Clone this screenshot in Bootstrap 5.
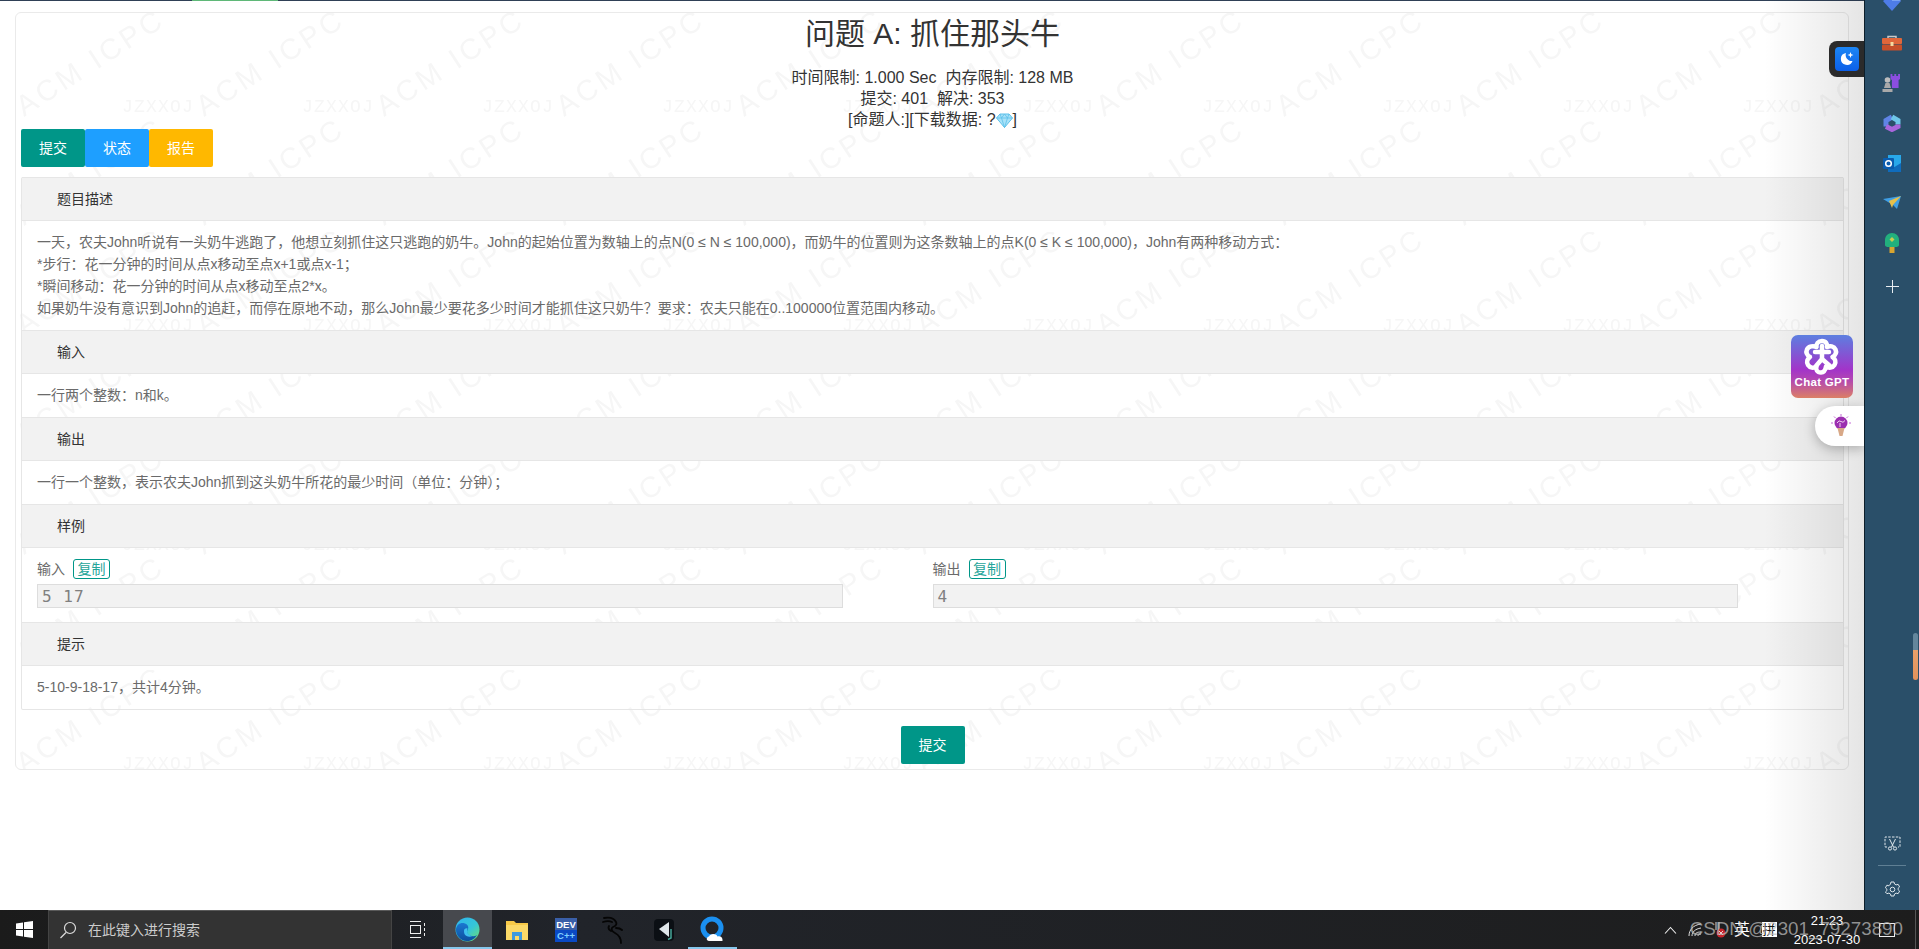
<!DOCTYPE html>
<html lang="zh-CN">
<head>
  <meta charset="UTF-8">
  <title>问题 A: 抓住那头牛</title>
  <link href="https://cdn.jsdelivr.net/npm/bootstrap@5.3.3/dist/css/bootstrap.min.css" rel="stylesheet">
  <style>
    html, body { height: 949px; overflow: hidden; }
    body { font-family: "Liberation Sans", "Noto Sans CJK SC", sans-serif; font-size: 14px; color: #333; background: #fff; }
    .page-main { width: 1864px; height: 910px; }
    .load-bar { height: 1px; background: #2f4056; }
    .load-bar i { display: block; width: 86px; height: 1px; margin-left: 192px; background: #5fb878; }
    .oj-panel { width: 1834px; margin: 11px 0 0 15px; padding: 0 4px 5px 5px; border: 1px solid #eaeaea; border-radius: 6px; overflow: hidden; }
    .wm-layer { width: 100%; height: 100%; }
    .wm-big { font: 29px "Liberation Sans", sans-serif; letter-spacing: 3.6px; fill: #f6f6f6; }
    .wm-small { font: 18px "Liberation Mono", monospace; letter-spacing: 1.2px; fill: #f6f6f6; }
    .oj-title { font-size: 30px; font-weight: 400; line-height: 40px; margin: 1px 0 13px; color: #333; }
    .oj-meta { height: 62px; font-size: 16px; line-height: 21px; color: #333; }
    .oj-btn { --bs-btn-padding-x: 0; --bs-btn-padding-y: 0; --bs-btn-font-size: 14px; --bs-btn-border-radius: 2px; --bs-btn-border-width: 0; --bs-btn-color: #fff; width: 64px; height: 38px; line-height: 38px; }
    .oj-teal { background: #009688; }
    .oj-blue { background: #1e9fff; }
    .oj-gold { background: #ffb800; }
    .oj-collapse { margin-top: 10px; border: 1px solid #e6e6e6; border-top: 0; border-radius: 2px; }
    .oj-head { height: 44px; line-height: 42px; padding-left: 35px; background: #f2f2f2; border-top: 1px solid #e6e6e6; border-bottom: 1px solid #e6e6e6; color: #333; }
    .oj-body { padding: 10px 15px 11px; line-height: 22px; color: #6a6a6a; }
    .oj-sample { padding: 11px 15px 14px; color: #6a6a6a; }
    .copy-tag { display: inline-block; height: 20px; line-height: 18px; padding: 0 3.5px; margin-left: 8px; border: 1px solid #009688; border-radius: 3px; color: #26a59a; }
    .sample-top { height: 20px; line-height: 20px; margin-bottom: 5px; }
    .sample-box { width: 90%; height: 24px; padding: 1px 4px 0; background: #f2f2f2; border: 1px solid #ddd; font: 16px/22px "DejaVu Sans Mono", monospace; letter-spacing: 1px; color: #808080; overflow: hidden; }
    .oj-foot { margin-top: 16px; }
    .edge-shade { top: 0; right: 0; width: 100px; height: 910px; background: linear-gradient(to right, rgba(0,0,0,0), rgba(0,0,0,.1)); pointer-events: none; }
    .moon-tab { top: 41px; right: 0; width: 35px; height: 36px; background: #2b2b2b; border-radius: 8px 0 0 8px; padding: 6px 0 0 6px; }
    .gpt-tile { top: 335px; right: 11px; width: 62px; height: 63px; border-radius: 7px; background: linear-gradient(#5c7fe0, #a234c9 55%, #b348b0 72%, #dc7f66); text-align: center; }
    .gpt-tile span { display: block; margin-top: -3px; font-size: 11.5px; font-weight: 700; line-height: 14px; color: #fff; letter-spacing: .3px; }
    .bulb-tab { top: 406px; right: 0; width: 49px; height: 40px; background: #fff; border-radius: 20px 0 0 20px; box-shadow: 0 3px 12px rgba(0,0,0,.25); padding: 8px 0 0 16px; }
    .side-bar { width: 55px; height: 910px; background: #2a4f69; border-left: 1px solid #0d1f2b; overflow: hidden; }
    .side-icons { margin-top: -17px; }
    .side-item { height: 40px; }
    .side-plus { margin-top: 3px; }
    .side-sep { width: 28px; height: 1px; background: #5f7f94; margin: 2px auto 0; }
    .side-gear { margin: 3px 0 1px; }
    .side-thumb { top: 633px; right: 1px; width: 5px; height: 47px; border-radius: 3px; background: linear-gradient(#64869c 36%, #e8a06a 37%, #e0925c); }
    .task-bar { height: 39px; background: linear-gradient(to right, #1b1b1b, #21242a 30%, #1d1d1d); color: #fff; }
    .task-start { width: 48px; }
    .task-search { width: 344px; height: 39px; background: #333; border-top: 1px solid #5a5a5a; border-left: 1px solid #444; border-right: 1px solid #444; color: #ccc; padding-left: 10px; gap: 11px; }
    .task-view { width: 51px; }
    .task-app { width: 49px; height: 39px; }
    .task-on { background: #47494e; box-shadow: inset 0 -2px 0 #86c7ec; }
    .task-mark { box-shadow: inset 0 -2px 0 #86c7ec; }
    .tray-zone { margin-left: auto; }
    .tray-cell { height: 39px; font-size: 16px; }
    .clock-cell { width: 82px; font-size: 13px; line-height: 19px; text-align: center; }
    .ime-box { background: #fff; color: #111; width: 15px; height: 15px; font-size: 13px; line-height: 15px; text-align: center; }
    .note-box { width: 16px; height: 14px; border: 1px solid #eee; }
    .tray-line { width: 1px; height: 39px; background: #555; margin: 0 3px 0 9px; }
    .csdn-mark { right: 16px; bottom: 8px; font-size: 18.8px; line-height: 24px; color: rgba(190,190,190,.72); white-space: nowrap; pointer-events: none; }
  </style>
</head>
<body>
  <div class="d-flex">
    <div class="page-main position-relative">
      <div class="load-bar"><i></i></div>
      <div class="oj-panel position-relative">
        <svg class="wm-layer position-absolute top-0 start-0" aria-hidden="true">
          <defs>
            <pattern id="wmTile" x="1" width="180" height="219" patternUnits="userSpaceOnUse">
              <text class="wm-big" transform="translate(7 104) rotate(-33)">ACM ICPC</text>
              <text class="wm-big" transform="translate(7 213) rotate(-33)">ACM ICPC</text>
              <text class="wm-small" x="105" y="99">JZXXOJ</text>
            </pattern>
          </defs>
          <rect width="100%" height="100%" fill="url(#wmTile)"></rect>
        </svg>
        <div class="position-relative">
          <h2 class="oj-title text-center">问题 A: 抓住那头牛</h2>
          <div class="oj-meta text-center">
            <div>时间限制: 1.000 Sec&nbsp;&nbsp;内存限制: 128 MB</div>
            <div>提交: 401&nbsp;&nbsp;解决: 353</div>
            <div>[命题人:][下载数据: ?<svg width="17" height="15" viewBox="0 0 17 15" class="align-text-bottom"><path d="M4 1h9l3.500 4-8 9.500L.5 5z" fill="#a8e2f8" stroke="#5cc0ea"/><path d="M.5 5h16M5.500 5l3 9.500 3-9.500M4 1l1.500 4L8.500 1l3 4L13 1" fill="none" stroke="#5cc0ea" stroke-width=".8"/></svg>]</div>
          </div>
          <div class="d-flex">
            <a class="btn oj-btn oj-teal" href="#">提交</a>
            <a class="btn oj-btn oj-blue" href="#">状态</a>
            <a class="btn oj-btn oj-gold" href="#">报告</a>
          </div>
          <div class="oj-collapse">
            <div class="oj-head">题目描述</div>
            <div class="oj-body">
              一天，农夫John听说有一头奶牛逃跑了，他想立刻抓住这只逃跑的奶牛。John的起始位置为数轴上的点N(0 ≤ N ≤ 100,000)，而奶牛的位置则为这条数轴上的点K(0 ≤ K ≤ 100,000)，John有两种移动方式：<br>
              *步行：花一分钟的时间从点x移动至点x+1或点x-1；<br>
              *瞬间移动：花一分钟的时间从点x移动至点2*x。<br>
              如果奶牛没有意识到John的追赶，而停在原地不动，那么John最少要花多少时间才能抓住这只奶牛？要求：农夫只能在0..100000位置范围内移动。
            </div>
            <div class="oj-head">输入</div>
            <div class="oj-body">一行两个整数：n和k。</div>
            <div class="oj-head">输出</div>
            <div class="oj-body">一行一个整数，表示农夫John抓到这头奶牛所花的最少时间（单位：分钟）；</div>
            <div class="oj-head">样例</div>
            <div class="oj-sample">
              <div class="row g-0">
                <div class="col-6">
                  <div class="sample-top">输入<span class="copy-tag">复制</span></div>
                  <pre class="sample-box m-0">5 17</pre>
                </div>
                <div class="col-6">
                  <div class="sample-top">输出<span class="copy-tag">复制</span></div>
                  <pre class="sample-box m-0">4</pre>
                </div>
              </div>
            </div>
            <div class="oj-head">提示</div>
            <div class="oj-body">5-10-9-18-17，共计4分钟。</div>
          </div>
          <div class="oj-foot text-center"><a class="btn oj-btn oj-teal" href="#">提交</a></div>
        </div>
      </div>

      <div class="edge-shade position-absolute"></div>

      <!-- floating tabs from browser extensions -->
      <div class="moon-tab position-absolute">
        <svg width="24" height="24" viewBox="0 0 24 24">
          <defs><linearGradient id="moonBg" x1="0" y1="0" x2="0" y2="1"><stop offset="0" stop-color="#1c86f5"/><stop offset="1" stop-color="#0c5fe8"/></linearGradient></defs>
          <rect width="24" height="24" rx="4" fill="url(#moonBg)"/>
          <path d="M11 6a6 6 0 1 0 6.500 8A6 6 0 0 1 11 6z" fill="#fff"/>
          <path d="M15.500 5l.8 2.200 2.200.8-2.200.8-.8 2.200-.8-2.200-2.200-.8 2.200-.8z" fill="#fff"/>
        </svg>
      </div>
      <div class="gpt-tile position-absolute">
        <svg width="40" height="40" viewBox="0 0 40 40" fill="none" stroke="#fff" stroke-width="4.500" stroke-linecap="round" stroke-linejoin="round" class="d-block mx-auto" style="margin-top:3px">
          <path d="M20 3c4 0 5.500 3 5 6 3-1.500 7-1 8.500 2.500s-.5 6-3 7.500c2.500 1.500 4 5 2 8s-5.500 3.500-8.500 1.500c-.5 3-2 6-5 6-4 0-5.500-3-4.500-6-3 2-6.500 1.500-8.500-1.500s-.5-6.500 2-8c-2.500-1.500-4.500-4-3-7.500S11.500 7.500 14.500 9c-.5-3 1.500-6 5.500-6z"/>
          <path d="M13 14h14M20 8v13l8 7M20 21l-6 7"/>
        </svg>
        <span>Chat GPT</span>
      </div>
      <div class="bulb-tab position-absolute">
        <svg width="20" height="24" viewBox="0 0 20 24">
          <g stroke="#c46ad6" stroke-width="1"><path d="M10 0v2M3 2.500l1.500 1.500M17 2.500L15.500 4M0 9h2M18 9h2"/></g>
          <circle cx="10" cy="9" r="6.500" fill="#9b2fb0"/>
          <path d="M6 9q2-3.500 4-1.500t4-1M9 9v4" stroke="#f0d0f0" fill="none"/>
          <path d="M6.500 14h7l-2 8h-3z" fill="#d8a887"/>
        </svg>
      </div>
    </div>

    <aside class="side-bar position-relative d-flex flex-column">
      <div class="side-icons">
        <div class="side-item d-flex align-items-center justify-content-center">
          <svg width="20" height="18" viewBox="0 0 20 18"><path d="M10 0l9 7-9 10-9-10z" fill="#4e7ce8"/><path d="M10 0l9 7H10z" fill="#7aa2f2"/></svg>
        </div>
        <div class="side-item d-flex align-items-center justify-content-center">
          <svg width="20" height="16" viewBox="0 0 20 16"><path d="M6 3V1.500h8V3" fill="none" stroke="#c9c9c9" stroke-width="1.500"/><rect y="3" width="20" height="6" rx="1" fill="#e0663a"/><rect y="9.500" width="20" height="6" rx="1" fill="#c64f2a"/><rect x="8.500" y="7" width="3" height="4" fill="#f4d9a0"/></svg>
        </div>
        <div class="side-item d-flex align-items-center justify-content-center">
          <svg width="20" height="20" viewBox="0 0 20 20"><path d="M10 1h2v2h2V1h2v2h2V1h2v5l-1.500 1v8h-7V7L10 6z" fill="#8b4ee0" transform="translate(-1 0) scale(.95 1)"/><circle cx="5.500" cy="7" r="2.800" fill="#bdbdbd"/><path d="M3.500 10h4l1.500 5H2zM.5 16h10v3H.5z" fill="#a9a9a9"/></svg>
        </div>
        <div class="side-item d-flex align-items-center justify-content-center">
          <svg width="18" height="18" viewBox="0 0 18 18" fill="none" stroke-width="5">
            <path d="M3 12.500V6.500L9 3" stroke="#5f84e6"/>
            <path d="M9 3l6 3.500v4" stroke="#6ec6ea"/>
            <path d="M15 10.500v2L9 15.500 3 12.500" stroke="#a866dc"/>
          </svg>
        </div>
        <div class="side-item d-flex align-items-center justify-content-center">
          <svg width="18" height="17" viewBox="0 0 18 17"><path d="M5 0h13v17H5z" fill="#28a8ea"/><path d="M5 8l6.500 4L18 8v9H5z" fill="#0f6cbd"/><rect y="3" width="11" height="11" rx="1" fill="#0a5cae"/><circle cx="5.500" cy="8.500" r="2.800" fill="none" stroke="#fff" stroke-width="1.500"/></svg>
        </div>
        <div class="side-item d-flex align-items-center justify-content-center">
          <svg width="18" height="14" viewBox="0 0 18 14"><path d="M0 3l18-3-4 13-4-4z" fill="#3f9fe6"/><path d="M6 5l12-5-8 9-1 3z" fill="#e6c04a"/></svg>
        </div>
        <div class="side-item d-flex align-items-center justify-content-center">
          <svg width="16" height="20" viewBox="0 0 16 20"><path d="M8 0c4 0 7 3 7 7v5c0 1.500-2 2-3 2H4c-1 0-3-.5-3-2V7c0-4 3-7 7-7z" fill="#22b07d"/><rect x="5.500" y="14" width="5" height="6" fill="#d8a530"/><path d="M8 4l2.500 2.500L8 9 5.500 6.500z" fill="#c8cc50"/></svg>
        </div>
        <div class="side-item side-plus d-flex align-items-center justify-content-center">
          <svg width="13" height="13" viewBox="0 0 13 13"><path d="M6.500 0v13M0 6.500h13" stroke="#e8eef2" stroke-width="1"/></svg>
        </div>
      </div>
      <div class="mt-auto">
        <div class="side-item d-flex align-items-center justify-content-center">
          <svg width="17" height="15" viewBox="0 0 17 15" fill="none" stroke="#dfe7ec" stroke-width="1"><path d="M3 11H1V1h15v10h-2" stroke-dasharray="2.500 1.300"/><path d="M5.500 3l4 8M11.500 3l-4 8"/><circle cx="6" cy="12.500" r="1.600"/><circle cx="11" cy="12.500" r="1.600"/></svg>
        </div>
        <div class="side-sep"></div>
        <div class="side-item side-gear d-flex align-items-center justify-content-center">
          <svg width="17" height="17" viewBox="0 0 17 17" fill="none" stroke="#dfe7ec" stroke-width="1"><path d="M7 1h3l.5 2 1.600.9 2-.6 1.500 2.600-1.500 1.400v1.400l1.500 1.400-1.500 2.600-2-.6-1.600.9-.5 2H7l-.5-2-1.600-.9-2 .6L1.400 11l1.500-1.400V8.200L1.400 6.800l1.500-2.600 2 .6L6.500 3z"/><circle cx="8.500" cy="8.500" r="2.300"/></svg>
        </div>
      </div>
      <div class="side-thumb position-absolute"></div>
    </aside>
  </div>

  <div class="task-bar d-flex align-items-center position-relative">
    <div class="task-start d-flex justify-content-center">
      <svg width="17" height="17" viewBox="0 0 17 17" fill="#fff"><path d="M0 2.400L7 1.400V8H0zM8 1.300L17 0v8H8zM0 9h7v6.600l-7-1zM8 9h9v8l-9-1.300z"/></svg>
    </div>
    <div class="task-search d-flex align-items-center">
      <svg width="18" height="18" viewBox="0 0 18 18" fill="none" stroke="#ddd" stroke-width="1.200"><circle cx="11" cy="7" r="5.500"/><path d="M7 11.500L1.500 17"/></svg>
      <span>在此键入进行搜索</span>
    </div>
    <div class="task-view d-flex justify-content-center">
      <svg width="17" height="17" viewBox="0 0 17 17" fill="none" stroke="#eee" stroke-width="1"><path d="M1 .5h11M1 16.500h11"/><rect x="1.500" y="4.500" width="10" height="8"/><path d="M15.500 2v3M15.500 7v3M15.500 12v3"/></svg>
    </div>
    <div class="task-app task-on d-flex align-items-center justify-content-center">
      <svg width="25" height="25" viewBox="0 0 25 25">
        <defs>
          <linearGradient id="edgeA" x1="0" y1="0" x2="1" y2="1"><stop offset="0" stop-color="#2fb4ee"/><stop offset=".55" stop-color="#35c6d8"/><stop offset="1" stop-color="#72e06a"/></linearGradient>
          <linearGradient id="edgeB" x1="0" y1="0" x2="0" y2="1"><stop offset="0" stop-color="#1a78d2"/><stop offset="1" stop-color="#0d4f9e"/></linearGradient>
        </defs>
        <circle cx="12.500" cy="12.500" r="12" fill="url(#edgeA)"/>
        <path d="M1 12C2 7 6 5 10 6.500c3.500 1.300 4 4.500 2.500 6.500-1 1.500-.5 4 2.500 5.500 2.500 1.200 5 .8 7-.5-2 3.500-5.500 6-9.500 6C6 24.500 .5 18.500 1 12z" fill="url(#edgeB)"/>
        <path d="M9 14c0-2 1.500-3 3.500-2.500-1 2-.5 5 2 6.500 1 .6 2 .9 3 1-3 1.500-6.500.5-8-2-.4-1-.5-2-.5-3z" fill="#3fc0ee"/>
      </svg>
    </div>
    <div class="task-app d-flex align-items-center justify-content-center">
      <svg width="22" height="20" viewBox="0 0 22 20"><path d="M0 1h8l2 2h12v17H0z" fill="#f7c948"/><path d="M0 5h22v15H0z" fill="#fbd968"/><path d="M6 20v-8h10v8h-3v-4H9v4z" fill="#3d9ae0"/></svg>
    </div>
    <div class="task-app d-flex align-items-center justify-content-center">
      <svg width="22" height="24" viewBox="0 0 22 24">
        <rect width="22" height="24" fill="#3a5fa8"/><rect y="12" width="22" height="12" fill="#0a49c4"/>
        <text x="11" y="10" text-anchor="middle" font-family="Liberation Sans" font-weight="700" font-size="9.500" fill="#fff">DEV</text>
        <text x="11" y="21" text-anchor="middle" font-family="Liberation Sans" font-weight="700" font-size="9.500" fill="#7fd0ff">C++</text>
      </svg>
    </div>
    <div class="task-app d-flex align-items-center justify-content-center">
      <svg width="26" height="30" viewBox="0 0 26 30" fill="none" stroke="#050505" stroke-width="1.800" stroke-linecap="round"><path d="M2 3c5-1 10 0 12 4 1 2 0 4-3 5-2 1-2 4 2 6 4 2 6 5 6 10M1 7c3-1 7-1 9 0M7 11c-1 2 0 4 2 5M14 13c3 0 5 1 6 2"/></svg>
    </div>
    <div class="task-app d-flex align-items-center justify-content-center">
      <svg width="20" height="22" viewBox="0 0 20 22"><rect width="20" height="22" rx="4" fill="#0b0f14"/><path d="M15 3v15L5 10z" fill="#dfe6ea"/><path d="M17 10v9l-3 1.500" fill="none" stroke="#46a596" stroke-width="1.500"/></svg>
    </div>
    <div class="task-app task-mark d-flex align-items-center justify-content-center">
      <svg width="26" height="28" viewBox="0 0 26 28"><circle cx="12" cy="12" r="9" fill="none" stroke="#1b90f0" stroke-width="5"/><path d="M9 25c-3 0-3-4 0-4.500 1-3 7-3.500 8.500 0 3-1 5.500 1 5 4.500z" fill="#fff"/></svg>
    </div>

    <div class="tray-zone d-flex align-items-center">
      <div class="tray-cell d-flex align-items-center justify-content-center" style="width:24px">
        <svg width="13" height="8" viewBox="0 0 13 8" fill="none" stroke="#eee" stroke-width="1.100"><path d="M1 7.500l5.500-6 5.500 6"/></svg>
      </div>
      <div class="tray-cell d-flex align-items-center justify-content-center" style="width:26px">
        <svg width="14" height="14" viewBox="0 0 14 14" fill="none" stroke="#ddd" stroke-width="1"><path d="M1 13C1 7 5 2 13 1M4 13c0-4 3-7 9-8M7 13c0-3 2-4 6-4M10 13c0-1 1-2 3-2"/></svg>
      </div>
      <div class="tray-cell d-flex align-items-center justify-content-center" style="width:24px">
        <svg width="14" height="18" viewBox="0 0 14 18"><path d="M3 1v8M6 1v8" stroke="#ddd"/><circle cx="8" cy="12" r="4.500" fill="#c8262c"/><path d="M6 10l4 4M10 10l-4 4" stroke="#fff" stroke-width=".8"/></svg>
      </div>
      <div class="tray-cell d-flex align-items-center justify-content-center" style="width:20px">英</div>
      <div class="tray-cell d-flex align-items-center justify-content-center" style="width:34px"><span class="ime-box">拼</span></div>
      <div class="clock-cell"><div>21:23</div><div>2023-07-30</div></div>
      <div class="tray-cell d-flex align-items-center justify-content-center" style="width:38px"><span class="note-box"></span></div>
      <div class="tray-line"></div>
    </div>
    <div class="csdn-mark position-absolute">CSDN @2301_79273890</div>
  </div>
</body>
</html>
